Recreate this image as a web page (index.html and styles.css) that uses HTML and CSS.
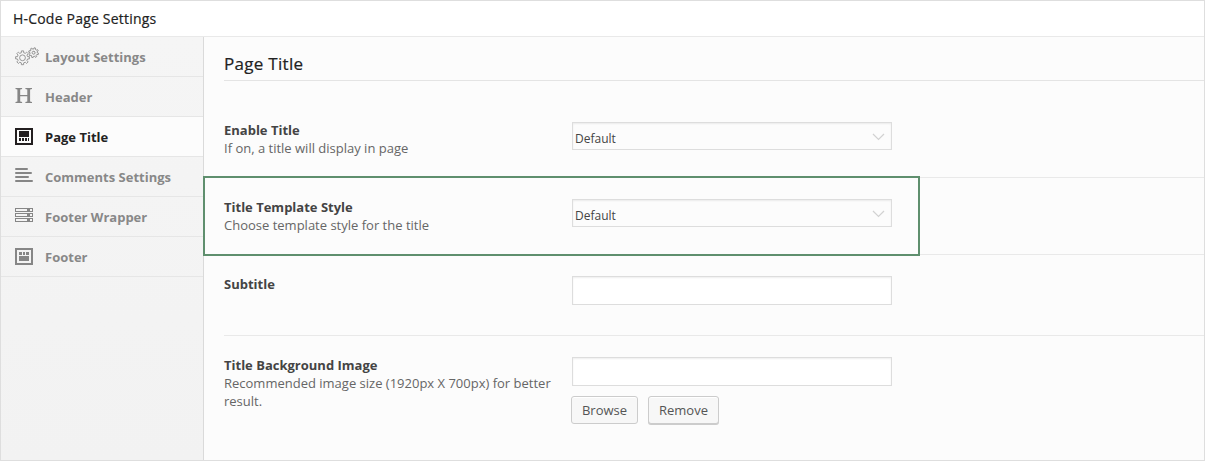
FILE: index.html
```html
<!DOCTYPE html>
<html lang="en">
<head>
<meta charset="utf-8">
<title>H-Code Page Settings</title>
<link rel="stylesheet" href="styles.css">
</head>
<body>
<div class="panel">
  <header class="panel-head">H-Code Page Settings</header>
  <div class="panel-body">
    <nav class="tabs">
      <a class="tab">
        <svg class="icon" width="26" height="22" viewBox="0 0 26 22" fill="none" stroke="#8d8d8d" stroke-width=".9">
          <g transform="translate(8.5 12.8)">
            <path id="gear" d="M5.07-1.17 6.9-1.1V1.1L5.07 1.17 4.41 2.76 5.66 4.11 4.11 5.66 2.76 4.41 1.17 5.07 1.1 6.9H-1.1L-1.17 5.07-2.76 4.41-4.11 5.66-5.66 4.11-4.41 2.76-5.07 1.17-6.9 1.1V-1.1L-5.07-1.17-4.41-2.76-5.66-4.11-4.11-5.66-2.76-4.41-1.17-5.07-1.1-6.9H1.1L1.17-5.07 2.76-4.41 4.11-5.66 5.66-4.11 4.41-2.76Z"/>
            <circle r="2.9"/>
          </g>
          <g transform="translate(19.6 7.7) rotate(15) scale(.71)" stroke-width="1.25">
            <use href="#gear"/>
            <circle r="2.1"/>
          </g>
        </svg>
        <span>Layout Settings</span>
      </a>
      <a class="tab">
        <svg class="icon" width="26" height="22" viewBox="0 0 26 22" fill="#868686">
          <path d="M1.500 3h6.600v1.100l-1.900.5v5.300h7.100V4.600l-1.900-.5V3H18v1.100l-1.900.5v11.800l1.900.5V18h-6.600v-1.100l1.900-.5v-5.200H6.200v5.200l1.900.5V18H1.500v-1.100l1.900-.5V4.600l-1.900-.5Z"/>
        </svg>
        <span>Header</span>
      </a>
      <a class="tab active">
        <svg class="icon" width="26" height="22" viewBox="0 0 26 22" fill="#231f20" shape-rendering="crispEdges">
          <path fill-rule="evenodd" d="M1 3h18v17H1ZM3 5v13h14V5Z"/>
          <path d="M5 6h10v6H5ZM5 13h2v3H5ZM8 13h2v3H8ZM11 13h2v3h-2ZM14 13h1v3h-1Z"/>
        </svg>
        <span>Page Title</span>
      </a>
      <a class="tab">
        <svg class="icon" width="26" height="22" viewBox="0 0 26 22" fill="none" stroke="#868686" stroke-width="2" stroke-linecap="round">
          <path d="M2 4h11M2 8h15M2 12h12M2 16h16"/>
        </svg>
        <span>Comments Settings</span>
      </a>
      <a class="tab">
        <svg class="icon" width="26" height="22" viewBox="0 0 26 22" fill="#868686" shape-rendering="crispEdges">
          <path fill-rule="evenodd" d="M1 3h18v4H1ZM2 4v2h11V4ZM16 4v2h2V4ZM1 8h18v4H1ZM2 9v2h11V9ZM16 9v2h2V9ZM1 13h18v4H1ZM2 14v2h11v-2ZM16 14v2h2v-2Z"/>
        </svg>
        <span>Footer Wrapper</span>
      </a>
      <a class="tab">
        <svg class="icon" width="26" height="22" viewBox="0 0 26 22" fill="#868686" shape-rendering="crispEdges">
          <path fill-rule="evenodd" d="M1 3h18v17H1ZM3 5v13h14V5Z"/>
          <path d="M5 7h3v3H5ZM9 7h2v3H9ZM12 7h3v3h-3ZM5 11h10v5H5Z"/>
        </svg>
        <span>Footer</span>
      </a>
    </nav>
    <main class="content">
      <h1 class="title">Page Title</h1>
      <section class="row row-first">
        <div class="label"><h2>Enable Title</h2><p>If on, a title will display in page</p></div>
        <div class="field">
          <div class="select"><span>Default</span><svg width="13" height="8" viewBox="0 0 13 8" fill="none" stroke="#d2d2d2" stroke-width="1.2"><path d="M1 1l5.500 5.500L12 1"/></svg></div>
        </div>
      </section>
      <section class="row row-marked">
        <div class="label"><h2>Title Template Style</h2><p>Choose template style for the title</p></div>
        <div class="field">
          <div class="select"><span>Default</span><svg width="13" height="8" viewBox="0 0 13 8" fill="none" stroke="#d2d2d2" stroke-width="1.2"><path d="M1 1l5.500 5.500L12 1"/></svg></div>
        </div>
        <div class="marker"></div>
      </section>
      <section class="row row-subtitle">
        <div class="label"><h2>Subtitle</h2></div>
        <div class="field"><input class="input" type="text"></div>
      </section>
      <section class="row row-image">
        <div class="label"><h2>Title Background Image</h2><p>Recommended image size (1920px X 700px) for better result.</p></div>
        <div class="field">
          <input class="input" type="text">
          <div class="buttons"><button class="button browse">Browse</button><button class="button remove">Remove</button></div>
        </div>
      </section>
    </main>
  </div>
</div>
</body>
</html>
```

FILE: styles.css
```css
* { box-sizing: border-box; }
body {
  margin: 0;
  font: 13px/18px "Open Sans", sans-serif;
  color: #666;
}
.panel {
  display: flex;
  flex-direction: column;
  height: 461px;
  border: 1px solid #dedede;
  background: #fcfcfc;
  overflow: hidden;
}
.panel-head {
  height: 36px;
  padding-left: 12px;
  border-bottom: 1px solid #e9e9e9;
  background: #fff;
  color: #222;
  font-size: 14px;
  letter-spacing: .2px;
  line-height: 35px;
  -webkit-text-stroke: .2px #222;
}
.panel-body { display: flex; flex: 1; }
.tabs {
  width: 203px;
  border-right: 1px solid #dadada;
  background: linear-gradient(#f5f5f5, #f2f2f2);
}
.tab {
  display: flex;
  align-items: flex-start;
  height: 40px;
  padding: 8px 0 0 13px;
  border-bottom: 1px solid #e6e6e6;
  color: #888;
  font-weight: 700;
}
.tab span { padding-top: 3px; }
.icon { flex: none; margin-right: 5px; }
.active { background: #fcfcfc; color: #222; }
.content { flex: 1; padding-left: 20px; }
.title {
  height: 44px;
  margin: 0;
  border-bottom: 1px solid #e4e4e4;
  color: #222;
  font-size: 17px;
  font-weight: 400;
  letter-spacing: .3px;
  line-height: 53px;
  -webkit-text-stroke: .2px #222;
}
.row {
  position: relative;
  display: flex;
  border-bottom: 1px solid #e9e9e9;
}
.row-first { height: 97px; padding-top: 41px; }
.row-marked { height: 77px; padding-top: 21px; }
.row-subtitle { height: 81px; padding-top: 21px; }
.row-image { height: 124px; padding-top: 21px; border-bottom: 0; }
.label { width: 348px; margin-top: -1px; padding-right: 12px; }
.label h2 { margin: 0; color: #444; font-size: 13px; line-height: 18px; }
.label p { margin: 0; }
.field { width: 320px; }
.select {
  display: flex;
  justify-content: space-between;
  height: 28px;
  padding: 5px 6px 0 2px;
  border: 1px solid #ddd;
  box-shadow: inset 0 1px 2px rgba(0, 0, 0, .07);
  color: #444;
  font-size: 12px;
  line-height: 22px;
}
.select svg { margin-top: 5px; }
.input {
  display: block;
  width: 320px;
  height: 29px;
  border: 1px solid #ddd;
  box-shadow: inset 0 1px 2px rgba(0, 0, 0, .07);
  background: #fff;
}
.marker {
  position: absolute;
  top: -2px;
  left: -21px;
  width: 717px;
  height: 80px;
  border: 2px solid #5f8f6e;
}
.buttons { display: flex; align-items: flex-start; gap: 10px; margin: 10px 0 0 -1px; }
.button {
  height: 28px;
  padding: 0;
  border: 1px solid #ccc;
  border-radius: 3px;
  background: #f7f7f7;
  box-shadow: inset 0 1px 0 #fff;
  color: #555;
  font: 13px/26px "Open Sans", sans-serif;
}
.browse { width: 67px; }
.remove { width: 71px; box-shadow: inset 0 1px 0 #fff, 0 1px 0 #ccc; }
```
